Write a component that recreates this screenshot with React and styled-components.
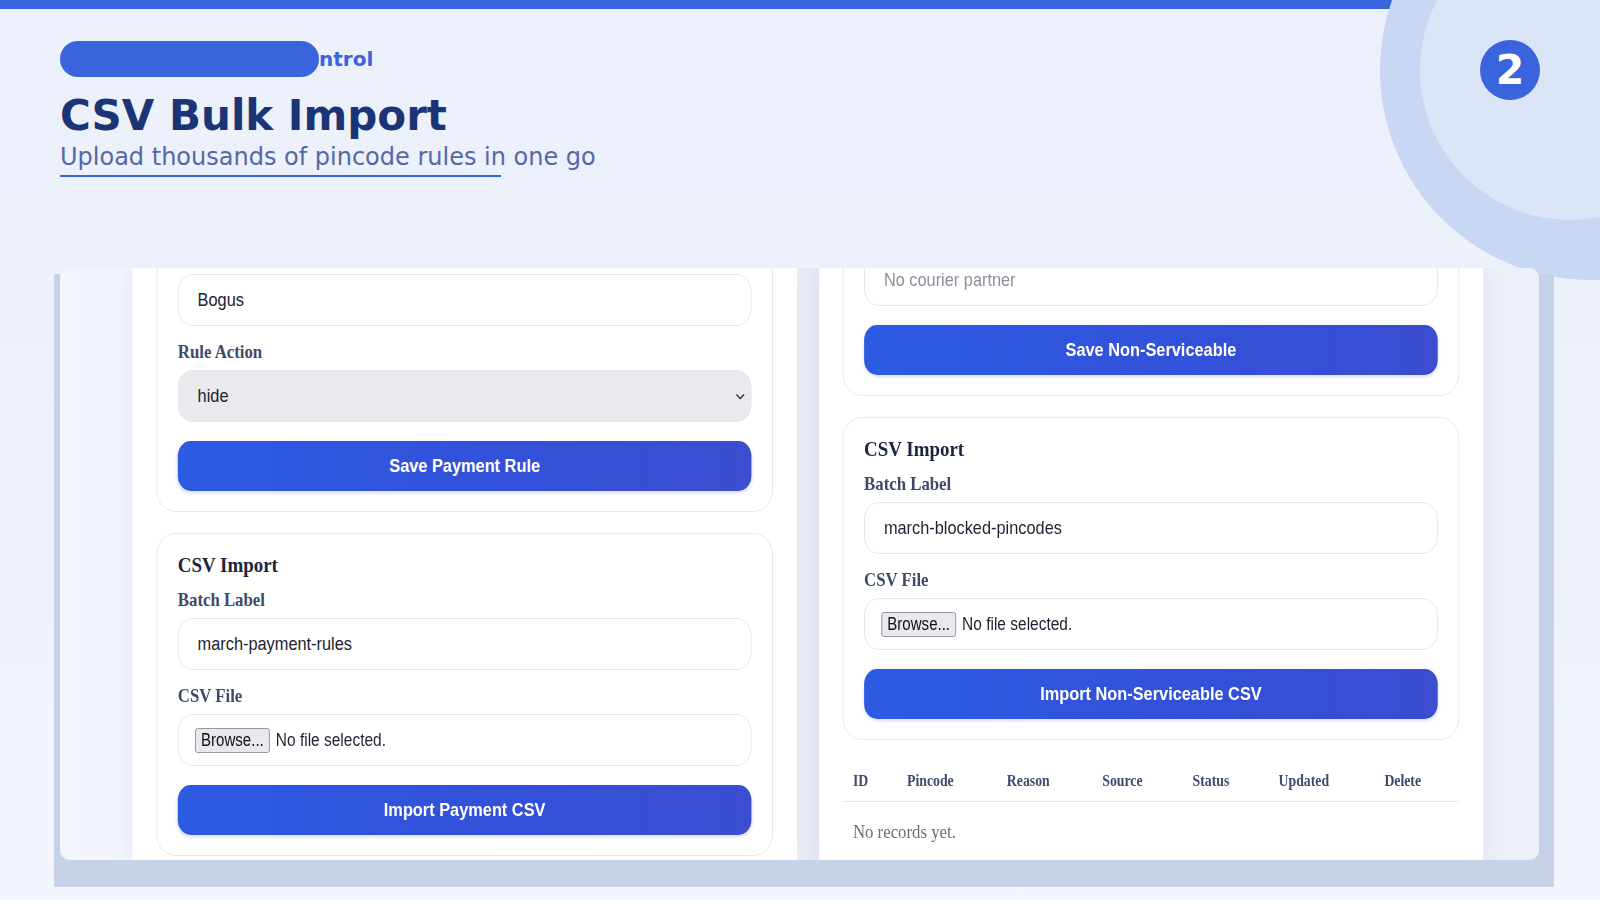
import React from 'react';
import styled, { createGlobalStyle } from 'styled-components';

// the embedded app screenshot is a little squeezed sideways in the slide
const SQUISH = 0.86;
const SHOT_W = 1479;

const GlobalStyle = createGlobalStyle`
  html, body {
    margin: 0;
    padding: 0;
  }
  body {
    width: 1600px;
    height: 900px;
    overflow: hidden;
    background: #edf1fa;
  }
`;

const Slide = styled.div`
  position: relative;
  width: 1600px;
  height: 900px;
  overflow: hidden;
  background: linear-gradient(180deg, #ebf0fa 0%, #eef2fb 55%, #f3f6fe 100%);
  font-family: 'DejaVu Sans', 'Liberation Sans', sans-serif;
`;

const TopBar = styled.div`
  height: 9px;
  background: #3a64db;
`;

const Ring = styled.div`
  position: absolute;
  left: ${(p) => p.$x - p.$r}px;
  top: ${(p) => p.$y - p.$r}px;
  width: ${(p) => p.$r * 2}px;
  height: ${(p) => p.$r * 2}px;
  border-radius: 50%;
  background: ${(p) => p.$color};
  z-index: 0;
`;

const StepBadge = styled.div`
  position: absolute;
  left: 1480px;
  top: 40px;
  width: 60px;
  height: 60px;
  border-radius: 50%;
  background: #3a64db;
  color: #fff;
  font-weight: bold;
  font-size: 41px;
  display: flex;
  align-items: center;
  justify-content: center;
  z-index: 2;
`;

const Header = styled.header`
  position: relative;
  z-index: 1;
  padding: 32px 0 0 60px;
`;

const Eyebrow = styled.div`
  display: flex;
  align-items: center;
  height: 36px;
  color: #3a64db;
  font-size: 20px;
  font-weight: bold;
`;

const Redacted = styled.span`
  width: 259px;
  height: 36px;
  border-radius: 18px;
  background: #3a64db;
`;

const Title = styled.h1`
  margin: 14px 0 0;
  font-size: 42px;
  line-height: 50px;
  font-weight: bold;
  color: #1b3476;
`;

const Subtitle = styled.p`
  margin: 1px 0 0;
  font-size: 24px;
  line-height: 30px;
  color: #5468a6;
`;

const Underline = styled.div`
  width: 441px;
  height: 2px;
  margin-top: 3px;
  background: #3a64db;
`;

const Frame = styled.div`
  position: relative;
  z-index: 1;
  display: flex;
  width: 1500px;
  height: 613px;
  margin: 97px 0 0 54px;
  background: #c6d2e7;
`;

const Shot = styled.div`
  width: ${SHOT_W}px;
  height: 592px;
  margin: -6px 0 0 6px;
  border-radius: 10px;
  overflow: hidden;
  background: #edf1f9;
`;

const Canvas = styled.div`
  display: flex;
  width: ${SHOT_W / SQUISH}px;
  height: 100%;
  transform: scaleX(${SQUISH});
  transform-origin: left top;
  background: linear-gradient(90deg, #f3f6fd 0%, #ecf0f8 100%);
`;

const Gutter = styled.div`
  flex: 0 0 ${(p) => p.$w}px;
  background: ${(p) => p.$bg || 'transparent'};
`;

const Panel = styled.div`
  flex: 0 0 ${(p) => p.$w}px;
  box-sizing: border-box;
  height: 100%;
  padding: 0 28px 0 ${(p) => p.$pl}px;
  display: flex;
  flex-direction: column;
  gap: 21px;
  background: #fff;
  box-shadow: 0 0 26px rgba(52, 78, 140, 0.1);
`;

const Card = styled.section`
  flex-shrink: 0;
  display: flex;
  flex-direction: column;
  margin-top: ${(p) => p.$offset || 0}px;
  padding: 20px 24px;
  border: 1px solid #e5e8ef;
  border-radius: 22px;
  background: #fff;
`;

const CardTitle = styled.h3`
  margin: 0 0 14px;
  font-family: 'Liberation Serif', 'Times New Roman', serif;
  font-size: 22px;
  line-height: 22px;
  font-weight: bold;
  color: #1c2540;
`;

const Label = styled.label`
  display: block;
  margin: ${(p) => (p.$first ? 0 : 16)}px 0 8px;
  font-family: 'Liberation Serif', 'Times New Roman', serif;
  font-size: 19.5px;
  line-height: 20px;
  font-weight: bold;
  color: #3f4a66;
`;

const TextInput = styled.input`
  box-sizing: border-box;
  width: 100%;
  height: 52px;
  padding: 0 22px;
  border: 1px solid #e2e6ee;
  border-radius: 17px;
  outline: none;
  background: #fff;
  font-family: 'Liberation Sans', Arial, sans-serif;
  font-size: 19px;
  color: #1d2230;

  &::placeholder {
    color: #8b909b;
  }
`;

const SelectBox = styled.div`
  box-sizing: border-box;
  height: 52px;
  padding: 0 6px 0 22px;
  display: flex;
  align-items: center;
  justify-content: space-between;
  border: 1px solid #e3e3ea;
  border-radius: 17px;
  background: #e9e9ee;
  font-family: 'Liberation Sans', Arial, sans-serif;
  font-size: 19px;
  color: #1d2230;
`;

const FileBox = styled.div`
  box-sizing: border-box;
  height: 52px;
  padding: 0 19px;
  display: flex;
  align-items: center;
  border: 1px solid #e2e6ee;
  border-radius: 17px;
  font-family: 'Liberation Sans', Arial, sans-serif;
  font-size: 18px;
  color: #1d2230;
`;

const BrowseButton = styled.span`
  height: 25px;
  box-sizing: border-box;
  padding: 0 6px;
  display: flex;
  align-items: center;
  border: 1px solid #8f8f9d;
  border-radius: 3px;
  background: #e9e9ed;
  font-size: 17.5px;
  color: #111;
  margin-right: 7px;
`;

const PrimaryButton = styled.button`
  height: 50px;
  margin-top: 19px;
  border: none;
  border-radius: 15px;
  background: linear-gradient(90deg, #2c5be2 0%, #3350d8 60%, #3b4dd0 100%);
  box-shadow: 0 2px 4px rgba(40, 70, 200, 0.18);
  color: #fff;
  font-family: 'Liberation Sans', Arial, sans-serif;
  font-size: 19px;
  font-weight: bold;
`;

const Table = styled.div`
  flex-shrink: 0;
  font-family: 'Liberation Serif', 'Times New Roman', serif;
`;

const TableRow = styled.div`
  display: grid;
  grid-template-columns: 63px 116px 111px 105px 100px 123px 1fr;
  padding-left: 12px;
  height: 40px;
  align-items: center;
  border-bottom: 1px solid #e6e9ef;
  font-size: 16px;
  font-weight: bold;
  color: #3f4a6b;
`;

const EmptyRow = styled.div`
  padding: 20px 12px;
  font-size: 19.5px;
  line-height: 20px;
  color: #6a6e78;
`;

const Chevron = () => (
  <svg width="12" height="7" viewBox="0 0 12 7">
    <polyline points="1.5,1.5 6,5.5 10.5,1.5" fill="none" stroke="#2b2f3a" strokeWidth="1.6" />
  </svg>
);

const FileField = () => (
  <FileBox>
    <BrowseButton>Browse...</BrowseButton>
    No file selected.
  </FileBox>
);

const CsvImportCard = ({ batch, action }) => (
  <Card>
    <CardTitle>CSV Import</CardTitle>
    <Label $first>Batch Label</Label>
    <TextInput readOnly value={batch} />
    <Label>CSV File</Label>
    <FileField />
    <PrimaryButton>{action}</PrimaryButton>
  </Card>
);

const columns = ['ID', 'Pincode', 'Reason', 'Source', 'Status', 'Updated', 'Delete'];

const App = () => (
  <Slide>
    <GlobalStyle />
    <TopBar />
    <Ring $x={1590} $y={70} $r={210} $color="#c8d7f4" />
    <Ring $x={1570} $y={70} $r={150} $color="#dbe5f8" />
    <StepBadge>2</StepBadge>

    <Header>
      <Eyebrow>
        <Redacted />
        ntrol
      </Eyebrow>
      <Title>CSV Bulk Import</Title>
      <Subtitle>Upload thousands of pincode rules in one go</Subtitle>
      <Underline />
    </Header>

    <Frame>
      <Shot>
        <Canvas>
          <Gutter $w={84} />
          <Panel $w={773} $pl={28}>
            <Card $offset={-15}>
              <TextInput readOnly value="Bogus" />
              <Label>Rule Action</Label>
              <SelectBox>
                hide
                <Chevron />
              </SelectBox>
              <PrimaryButton>Save Payment Rule</PrimaryButton>
            </Card>
            <CsvImportCard batch="march-payment-rules" action="Import Payment CSV" />
          </Panel>
          <Gutter $w={26} $bg="#e8ecf6" />
          <Panel $w={772} $pl={27}>
            <Card $offset={-35}>
              <TextInput readOnly placeholder="No courier partner" />
              <PrimaryButton>Save Non-Serviceable</PrimaryButton>
            </Card>
            <CsvImportCard batch="march-blocked-pincodes" action="Import Non-Serviceable CSV" />
            <Table>
              <TableRow>
                {columns.map((c) => (
                  <span key={c}>{c}</span>
                ))}
              </TableRow>
              <EmptyRow>No records yet.</EmptyRow>
            </Table>
          </Panel>
          <Gutter $w={65} />
        </Canvas>
      </Shot>
    </Frame>
  </Slide>
);

export default App;
